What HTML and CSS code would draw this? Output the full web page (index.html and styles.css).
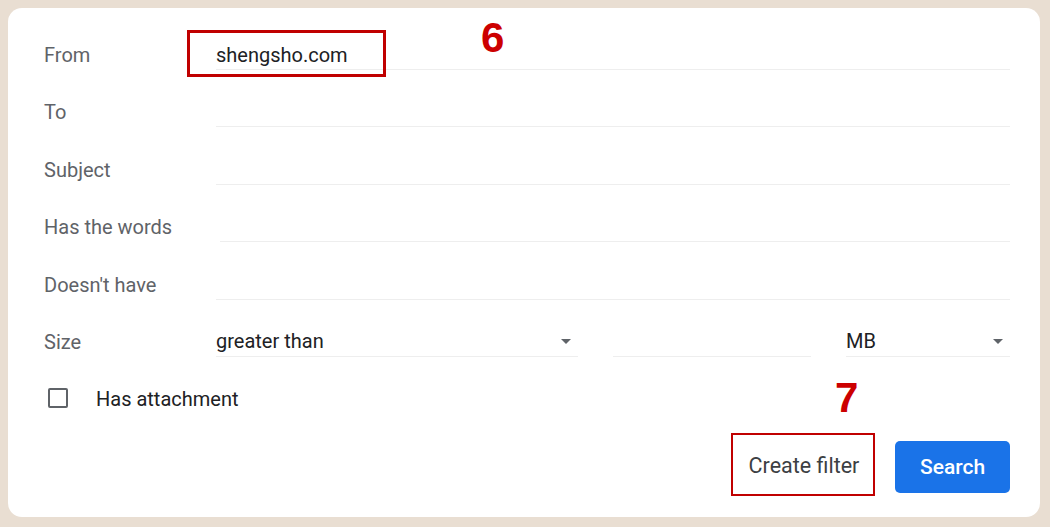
FILE: index.html
```html
<!DOCTYPE html>
<html>
<head>
<meta charset="utf-8">
<link rel="stylesheet" href="styles.css">
</head>
<body>
<div class="panel">
  <div class="row">
    <div class="label">From</div>
    <div class="field field-from">
      <span class="value">shengsho.com</span>
      <div class="mark-box"></div>
      <div class="mark-num mark-6">6</div>
    </div>
  </div>
  <div class="row">
    <div class="label">To</div>
    <div class="field"></div>
  </div>
  <div class="row">
    <div class="label">Subject</div>
    <div class="field"></div>
  </div>
  <div class="row">
    <div class="label">Has the words</div>
    <div class="field field-words"></div>
  </div>
  <div class="row">
    <div class="label">Doesn't have</div>
    <div class="field"></div>
  </div>
  <div class="row">
    <div class="label">Size</div>
    <div class="size-group">
      <div class="field select sel-op"><span class="value">greater than</span><span class="arrow"></span></div>
      <div class="field sel-num"></div>
      <div class="field select sel-unit"><span class="value">MB</span><span class="arrow"></span></div>
    </div>
  </div>
  <div class="row check-row">
    <span class="checkbox"></span>
    <span class="check-label">Has attachment</span>
  </div>
  <div class="actions">
    <div class="btn-filter">Create filter<div class="mark-num mark-7">7</div></div>
    <div class="btn-search">Search</div>
  </div>
</div>
</body>
</html>
```

FILE: styles.css
```css
html, body {
  margin: 0;
  padding: 0;
  background: #e9ded2;
}
body {
  padding: 8px 10px 10px 8px;
  font-family: Roboto, "Liberation Sans", Arial, sans-serif;
}
.panel {
  background: #ffffff;
  border-radius: 14px;
  height: 509px;
  box-sizing: border-box;
  padding: 30px 30px 0 36px;
  display: flex;
  flex-direction: column;
  gap: 25.4px;
}
.row {
  display: flex;
  align-items: stretch;
  height: 32px;
}
.label {
  width: 172px;
  flex: none;
  color: #5f6368;
  font-size: 20px;
  display: flex;
  align-items: center;
  padding-top: 2px;
}
.field {
  flex: 1;
  position: relative;
  border-bottom: 1px solid #eeeeee;
  display: flex;
  align-items: center;
  padding-top: 2px;
  color: #202124;
  font-size: 20px;
}
.field-words {
  margin-left: 4px;
}
.size-group {
  flex: 1;
  display: flex;
}
.sel-op {
  flex: none;
  width: 362px;
}
.sel-num {
  flex: none;
  width: 198px;
  margin-left: 35px;
}
.sel-unit {
  flex: none;
  width: 164px;
  margin-left: 35px;
}
.select .value {
  flex: 1;
}
.arrow {
  width: 0;
  height: 0;
  border-left: 5px solid transparent;
  border-right: 5px solid transparent;
  border-top: 5px solid #5f6368;
  margin-right: 7px;
}
.mark-box {
  position: absolute;
  left: -29px;
  top: -8px;
  width: 199px;
  height: 47px;
  box-sizing: border-box;
  border: 3px solid #c00000;
}
.mark-num {
  position: absolute;
  font-family: "Liberation Sans", Arial, sans-serif;
  font-weight: bold;
  font-size: 42px;
  line-height: 1;
  color: #cc0000;
}
.mark-6 {
  left: 265px;
  top: -21px;
}
.check-row {
  align-items: center;
}
.checkbox {
  width: 20px;
  height: 20px;
  box-sizing: border-box;
  border: 2px solid #5f6368;
  border-radius: 2px;
  margin-left: 4px;
}
.check-label {
  margin-left: 28px;
  font-size: 20px;
  color: #202124;
  padding-top: 2px;
}
.actions {
  display: flex;
  justify-content: flex-end;
  align-items: flex-start;
  gap: 20px;
  margin-top: -7px;
}
.btn-filter {
  position: relative;
  width: 144px;
  height: 63px;
  box-sizing: border-box;
  border: 2px solid #c00000;
  display: flex;
  align-items: center;
  justify-content: center;
  padding-left: 2px;
  padding-top: 2px;
  font-size: 21.5px;
  font-weight: 400;
  color: #3c4043;
}
.mark-7 {
  left: 102px;
  top: -58px;
}
.btn-search {
  margin-top: 8px;
  width: 115px;
  height: 52px;
  background: #1a73e8;
  border-radius: 5px;
  color: #ffffff;
  font-size: 21px;
  font-weight: 500;
  display: flex;
  align-items: center;
  justify-content: center;
}
```
